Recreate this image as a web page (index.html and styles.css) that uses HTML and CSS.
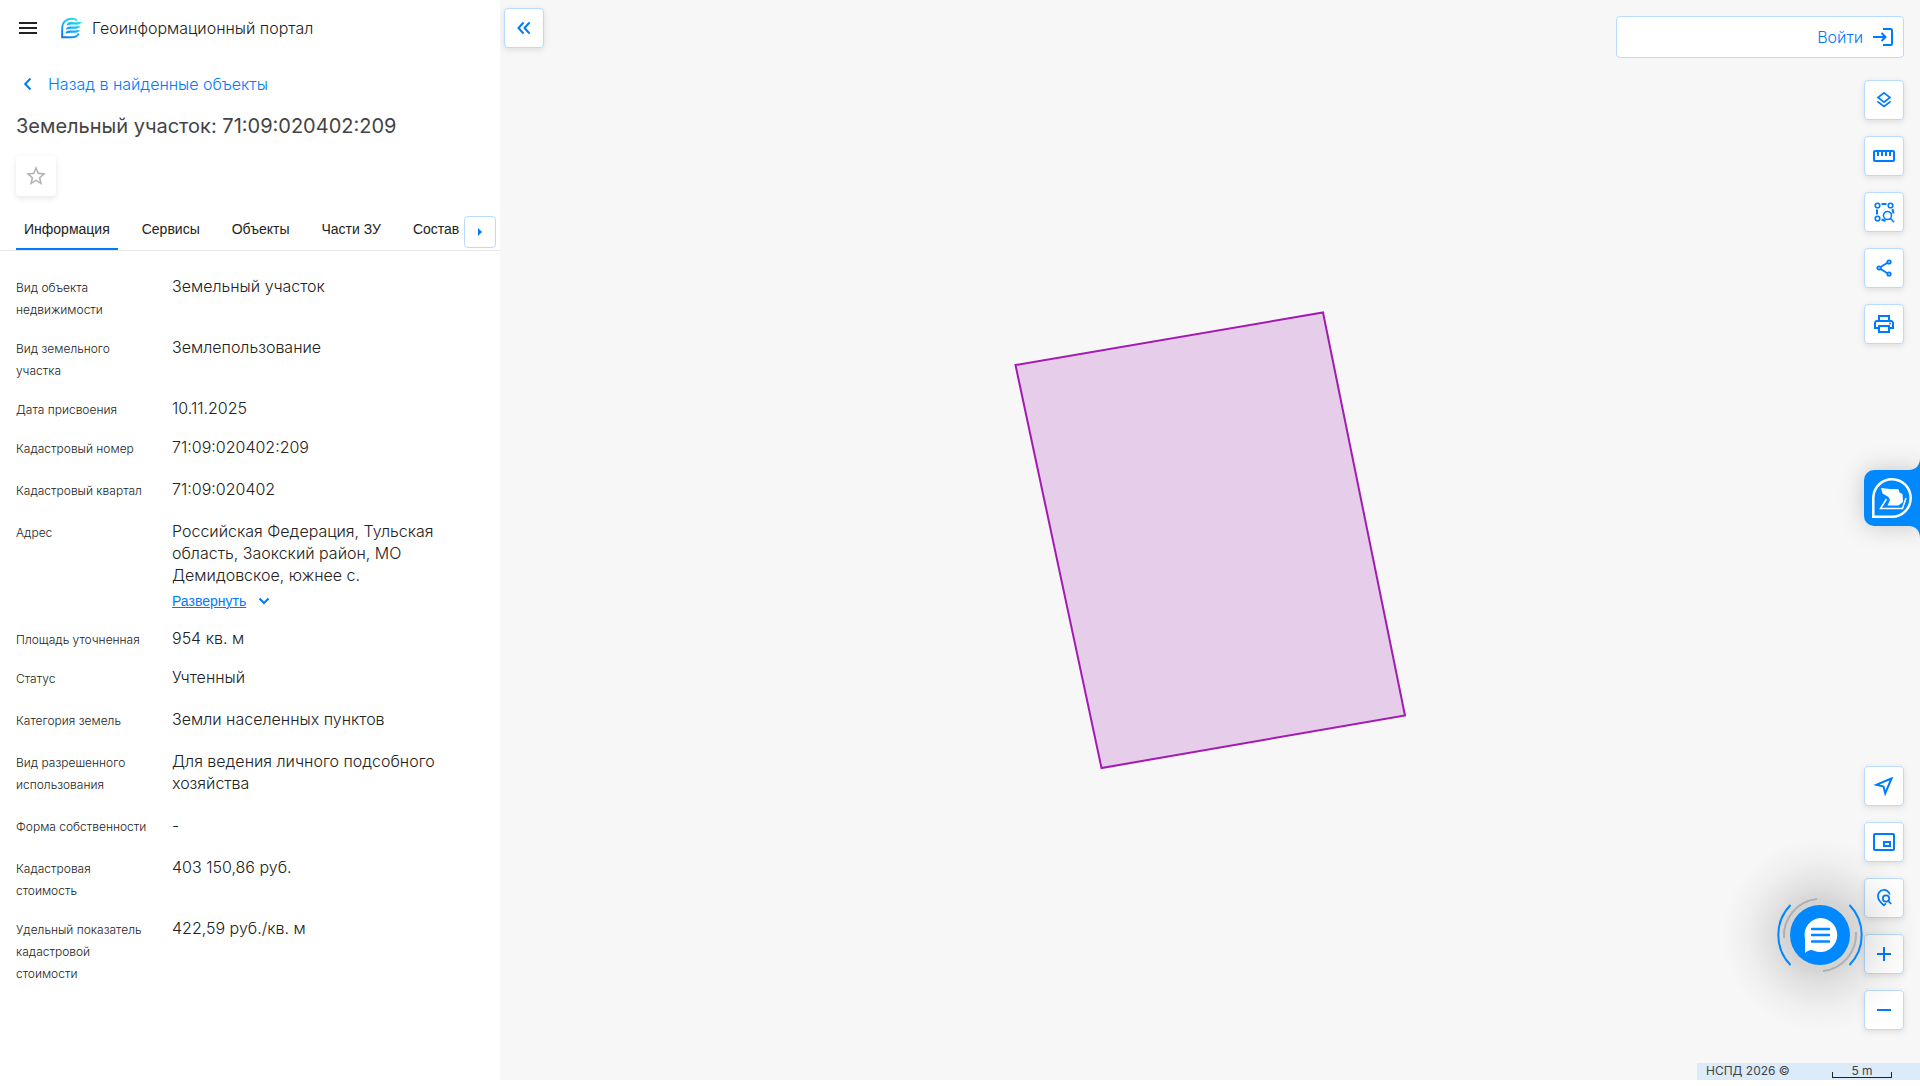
FILE: index.html
```html
<!DOCTYPE html>
<html lang="ru">
<head>
<meta charset="utf-8">
<meta name="viewport" content="width=device-width, initial-scale=1">
<title>Геоинформационный портал</title>
<link rel="stylesheet" href="styles.css">
</head>
<body>
<div class="app">
  <aside class="sidebar">
    <header class="topbar">
      <button class="icon-btn" type="button" aria-label="Меню">
        <svg width="24" height="24" viewBox="0 0 24 24" fill="#222"><path d="M3 6h18v2H3zM3 11h18v2H3zM3 16h18v2H3z"/></svg>
      </button>
      <a class="brand" href="#">
        <svg width="22" height="22" viewBox="0 0 22 22" aria-hidden="true">
          <defs><linearGradient id="logo" gradientUnits="userSpaceOnUse" x1="18" y1="1" x2="4" y2="21"><stop offset="0" stop-color="#2cecdc"/><stop offset=".45" stop-color="#10b8fb"/><stop offset="1" stop-color="#1670ff"/></linearGradient></defs>
          <path d="M17 3.200C15.500 2.200 13.800 1.800 12 1.800C6 1.800 2.200 5.500 2.200 11.500V20.200H12C15 20.200 17.500 18.800 18.800 16.500" fill="none" stroke="url(#logo)" stroke-width="2"/>
          <path d="M9 5.200C12 4.200 15 6 22 4.800C20.500 7.500 18 7.800 15 7.600C12.500 7.500 9.500 7.400 6.500 8.600C7 7 7.800 5.800 9 5.200Z" fill="url(#logo)"/>
          <path d="M7.500 10C11 8.900 15 10.200 20.500 8.800C19.500 11.300 17.500 11.800 15 11.700C12 11.600 9 11.600 6 12.700C6.200 11.400 6.700 10.400 7.500 10Z" fill="url(#logo)"/>
          <path d="M7 14C10.500 12.900 14.500 14.200 20 12.800C19 15.300 17.200 15.800 14.500 15.700C11.500 15.600 8.500 15.600 5.500 16.700C5.700 15.400 6.200 14.400 7 14Z" fill="url(#logo)"/>
        </svg>
        <span>Геоинформационный портал</span>
      </a>
    </header>

    <a class="back" href="#">
      <svg width="24" height="24" viewBox="0 0 24 24" fill="none" stroke="#007bff" stroke-width="2"><path d="M14.500 6.500L9.200 12l5.300 5.500"/></svg>
      <span>Назад в найденные объекты</span>
    </a>
    <h1 class="title">Земельный участок: 71:09:020402:209</h1>
    <button class="favorite" type="button" aria-label="В избранное">
      <svg width="24" height="24" viewBox="0 0 24 24" fill="#b4b4b4"><path d="M22 9.240l-7.190-.62L12 2 9.190 8.630 2 9.240l5.460 4.730L5.820 21 12 17.270 18.180 21l-1.630-7.030L22 9.240zM12 15.400l-3.760 2.270 1-4.280-3.320-2.880 4.380-.38L12 6.100l1.710 4.040 4.380.38-3.320 2.880 1 4.280L12 15.400z"/></svg>
    </button>

    <nav class="tabs">
      <div class="tab-list">
        <a class="tab active" href="#">Информация</a>
        <a class="tab" href="#">Сервисы</a>
        <a class="tab" href="#">Объекты</a>
        <a class="tab" href="#">Части ЗУ</a>
        <a class="tab" href="#">Состав</a>
      </div>
      <button class="tab-next" type="button" aria-label="Следующие вкладки">
        <svg width="6" height="10" viewBox="0 0 6 10" fill="#007bff"><path d="M1 1l4 4-4 4z"/></svg>
      </button>
    </nav>

    <dl class="props">
      <div class="row tight"><dt>Вид объекта недвижимости</dt><dd>Земельный участок</dd></div>
      <div class="row tight"><dt>Вид земельного участка</dt><dd>Землепользование</dd></div>
      <div class="row tight"><dt>Дата присвоения</dt><dd>10.11.2025</dd></div>
      <div class="row"><dt>Кадастровый номер</dt><dd>71:09:020402:209</dd></div>
      <div class="row"><dt>Кадастровый квартал</dt><dd>71:09:020402</dd></div>
      <div class="row tight"><dt>Адрес</dt><dd>Российская Федерация, Тульская область, Заокский район, МО Демидовское, южнее с.
        <button class="expand" type="button"><span>Развернуть</span><svg width="12" height="12" viewBox="0 0 12 12" fill="none" stroke="#007bff" stroke-width="2"><path d="M1.500 3.500L6 8l4.500-4.500"/></svg></button></dd></div>
      <div class="row tight"><dt>Площадь уточненная</dt><dd>954 кв. м</dd></div>
      <div class="row"><dt>Статус</dt><dd>Учтенный</dd></div>
      <div class="row"><dt>Категория земель</dt><dd>Земли населенных пунктов</dd></div>
      <div class="row"><dt>Вид разрешенного использования</dt><dd>Для ведения личного подсобного хозяйства</dd></div>
      <div class="row"><dt>Форма собственности</dt><dd>-</dd></div>
      <div class="row tight"><dt>Кадастровая стоимость</dt><dd>403 150,86 руб.</dd></div>
      <div class="row"><dt>Удельный показатель кадастровой стоимости</dt><dd>422,59 руб./кв. м</dd></div>
    </dl>
  </aside>

  <main class="map">
    <svg class="parcel" width="394" height="460" viewBox="0 0 394 460" aria-label="Земельный участок 71:09:020402:209"><path d="M2.500 55L310 2.500L392 405.500L88.500 458Z" fill="#e6cde9" stroke="#a31bb3" stroke-width="2"/></svg>

    <button class="tool collapse" type="button" aria-label="Свернуть панель">
      <svg width="24" height="24" viewBox="0 0 24 24" fill="none" stroke="#007bff" stroke-width="2"><path d="M11.500 6.500L6.500 12l5 5.500M17.500 6.500L12.500 12l5 5.500"/></svg>
    </button>

    <div class="controls">
      <button class="login" type="button"><span>Войти</span>
        <svg width="24" height="24" viewBox="0 0 24 24" fill="none" stroke="#007bff" stroke-width="2"><path d="M12 4h7.500a1.500 1.500 0 0 1 1.500 1.500v13a1.500 1.500 0 0 1-1.500 1.500H12M2 12h12M10.500 8l4 4-4 4"/></svg>
      </button>
      <div class="tools">
        <button class="tool" type="button" aria-label="Слои"><svg width="24" height="24" viewBox="0 0 24 24" fill="none" stroke="#007bff" stroke-width="1.700"><path d="M12 4.800l6 4.700-6 4.700-6-4.700zM5.300 13.300L12 18.500l6.700-5.200"/></svg></button>
        <button class="tool" type="button" aria-label="Измерения"><svg width="24" height="24" viewBox="0 0 24 24" fill="none" stroke="#007bff" stroke-width="2"><rect x="2" y="7" width="20" height="10" rx="1"/><path d="M6 7v5M10 7v5M14 7v5M18 7v5"/></svg></button>
        <button class="tool" type="button" aria-label="Поиск по области"><svg width="24" height="24" viewBox="0 0 24 24" fill="none" stroke="#007bff" stroke-width="1.600"><circle cx="5.500" cy="5.500" r="2.300"/><circle cx="18.500" cy="5.500" r="2.300"/><circle cx="5.500" cy="18.500" r="2.300"/><circle cx="15.500" cy="15.500" r="4"/><path d="M18.500 18.500l3.500 3.700"/><path stroke-width="2" d="M9.500 4h5M5 9.500v5M20.500 9l1 4.500M9.500 19.500l4 1.500"/></svg></button>
        <button class="tool" type="button" aria-label="Поделиться"><svg width="24" height="24" viewBox="0 0 24 24" fill="none" stroke="#007bff" stroke-width="1.800"><circle cx="7" cy="12" r="1.700"/><circle cx="17" cy="6" r="1.700"/><circle cx="17" cy="18" r="1.700"/><path d="M8.500 11l7-4.200M8.500 13l7 4.200"/></svg></button>
        <button class="tool" type="button" aria-label="Печать"><svg width="24" height="24" viewBox="0 0 24 24" fill="#007bff"><path d="M19 8h-1V3H6v5H5c-1.660 0-3 1.340-3 3v6h4v4h12v-4h4v-6c0-1.660-1.340-3-3-3zM8 5h8v3H8V5zm8 14H8v-4h8v4zm2-4v-2H6v2H4v-4c0-.55.45-1 1-1h14c.55 0 1 .45 1 1v4h-2z"/><circle cx="18" cy="11.500" r="1"/></svg></button>
      </div>
      <div class="tools bottom">
        <button class="tool" type="button" aria-label="Моё местоположение"><svg width="24" height="24" viewBox="0 0 24 24" fill="none" stroke="#007bff" stroke-width="2"><path d="M19.500 4.500L4.500 10.700l7 1.800 1.700 6.800z"/></svg></button>
        <button class="tool" type="button" aria-label="Обзорная карта"><svg width="24" height="24" viewBox="0 0 24 24" fill="none" stroke="#007bff" stroke-width="2"><rect x="2" y="4" width="20" height="16" rx="1"/><rect x="12" y="12" width="6" height="4"/></svg></button>
        <button class="tool" type="button" aria-label="Поиск по координатам"><svg width="24" height="24" viewBox="0 0 24 24" fill="none" stroke="#007bff" stroke-width="1.700"><path d="M17.800 8.500A6 6 0 0 0 6 10.500c0 3 2.500 6 5.800 8.800l2.200-2"/><circle cx="14" cy="12.500" r="3.200"/><path d="M16.200 14.800l3 3.200"/></svg></button>
        <button class="tool" type="button" aria-label="Приблизить"><svg width="24" height="24" viewBox="0 0 24 24" fill="#007bff"><path d="M5 11h14v2H5zM11 5h2v14h-2z"/></svg></button>
        <button class="tool" type="button" aria-label="Отдалить"><svg width="24" height="24" viewBox="0 0 24 24" fill="#007bff"><path d="M5 11h14v2H5z"/></svg></button>
      </div>
    </div>

    <button class="side-widget" type="button" aria-label="Виджет помощи">
      <svg width="56" height="80" viewBox="0 0 56 80"><path d="M56 0C56 7 52 12 45 12H10A10 10 0 0 0 0 22V58A10 10 0 0 0 10 68H45C52 68 56 73 56 80Z" fill="#0088ff"/>
      <path d="M9.300 58.700V39.500A18.700 18.700 0 1 1 28 58.700Z" fill="none" stroke="#fff" stroke-width="2.500"/>
      <path d="M17 30L26 31L34.500 31.200L35.500 34.500L38.500 36L39 44L34.500 47.500H23.500L26 42L24.500 39L18.500 35.500Z" fill="#fff"/>
      <path d="M22.500 41L16.500 50.500H38.500L42 40" fill="none" stroke="#fff" stroke-width="1.500"/></svg>
    </button>

    <button class="chat" type="button" aria-label="Открыть чат">
      <svg width="88" height="88" viewBox="0 0 88 88" fill="none"><circle cx="44" cy="44" r="30" fill="#0088ff"/>
      <path d="M14.500 14A43 43 0 0 0 14.500 74M73.500 14A43 43 0 0 1 73.500 74" stroke="#0088ff" stroke-width="2"/>
      <path d="M41 8A37 37 0 0 0 8 47M47 80A37 37 0 0 0 80 41" stroke="#b0b0b0" stroke-width="2"/>
      <path d="M44.500 27A17 17 0 1 1 38 59.800C34 58 32 60 29 62V48A17 17 0 0 1 44.500 27Z" fill="#fff"/>
      <path d="M36 38h17M36 44h17M36 50.500h17" stroke="#0088ff" stroke-width="2.400" stroke-linecap="round"/></svg>
    </button>

    <footer class="attribution"><span>НСПД 2026 ©</span><span class="scale">5 m</span></footer>
  </main>
</div>
</body>
</html>
```
FILE: styles.css
```css
* { box-sizing: border-box; }
body {
  margin: 0;
  background: #fff;
  color: #222;
  font-family: Inter, "Noto Sans", sans-serif;
  font-size: 16px;
  font-weight: 300;
}
button { font: inherit; color: inherit; padding: 0; border: 0; background: none; cursor: pointer; }
a { color: inherit; text-decoration: none; }
svg { display: block; flex: none; }

.app { display: flex; height: calc(100vh - 6px); }

.sidebar { width: 500px; flex: none; background: #fff; overflow: hidden; }
.topbar { display: flex; align-items: center; gap: 20px; height: 56px; padding: 0 16px; }
.brand { display: flex; align-items: center; gap: 10px; }
.back { display: flex; align-items: center; gap: 8px; height: 56px; padding: 0 16px; color: #007bff; }
.title { margin: 0; padding: 0 16px; font-size: 20px; font-weight: 400; line-height: 28px; color: #444; }
.favorite {
  display: flex; align-items: center; justify-content: center;
  width: 40px; height: 40px; margin: 16px 16px 0;
  border-radius: 4px; box-shadow: 0 2px 6px rgba(0, 0, 0, .1);
}

.tabs { display: flex; align-items: flex-end; height: 55px; padding-right: 4px; border-bottom: 1px solid #e8e8e8; }
.tab-list { display: flex; flex: 1; gap: 16px; padding-left: 16px; overflow: hidden; }
.tab {
  height: 41px; padding: 10px 8px 0;
  font-family: "Liberation Sans", Arial, sans-serif; font-size: 14px; font-weight: 400; line-height: 20px;
  white-space: nowrap;
}
.tab.active { border-bottom: 2px solid #007bff; }
.tab-next {
  display: flex; align-items: center; justify-content: center;
  width: 32px; height: 32px; margin-bottom: 2px;
  border: 1px solid #b8dbff; border-radius: 4px; background: #fff;
}

.props { margin: 0; padding: 24px 16px; }
.row { display: grid; grid-template-columns: 132px 272px; column-gap: 24px; padding-bottom: 18px; }
.row.tight { padding-bottom: 15px; }
dt { font-size: 12px; line-height: 22px; padding-top: 2px; }
dd { margin: 0; line-height: 22px; }
.expand {
  display: flex; align-items: center; gap: 12px; margin-top: 4px;
  color: #007bff; font-family: "Liberation Sans", Arial, sans-serif; font-size: 14px; line-height: 22px;
}
.expand span { text-decoration: underline; }

.map { position: relative; flex: 1; background: #f7f7f7; overflow: hidden; }
.parcel { position: absolute; left: 513px; top: 310px; }

.tool {
  display: flex; align-items: center; justify-content: center;
  width: 40px; height: 40px;
  border: 1px solid #b8dbff; border-radius: 4px; background: #fff;
  box-shadow: 0 2px 6px rgba(0, 0, 0, .1);
}
.collapse { position: absolute; left: 4px; top: 8px; }
.controls {
  display: flex; flex-direction: column; align-items: flex-end;
  height: 100%; padding: 16px 16px 50px;
}
.login {
  display: flex; align-items: center; justify-content: flex-end; gap: 8px;
  width: 288px; height: 42px; padding-right: 8px;
  border: 1px solid #b8dbff; border-radius: 4px; background: #fff; color: #007bff;
}
.tools { display: flex; flex-direction: column; gap: 16px; margin-top: 22px; }
.tools.bottom { margin-top: auto; }

.side-widget { position: absolute; right: 0; top: 458px; filter: drop-shadow(0 0 12px rgba(0, 0, 0, .2)); }
.chat { position: absolute; right: 56px; bottom: 101px; border-radius: 50%; }
.chat::before {
  content: ""; position: absolute; inset: -54px; border-radius: 50%; pointer-events: none;
  background: radial-gradient(circle closest-side, rgba(0, 0, 0, .14) 35%, rgba(0, 0, 0, .09) 50%, rgba(0, 0, 0, .03) 75%, transparent);
}
.chat svg { position: relative; }

.attribution {
  position: absolute; right: 0; bottom: 0;
  display: flex; justify-content: space-between; align-items: center;
  width: 223px; height: 17px; padding: 0 28px 2px 9px;
  background: #dbebfa; color: #444; font-size: 12px; font-weight: 400;
}
.scale { width: 60px; height: 14px; line-height: 14px; text-align: center; position: relative; }
.scale::after { content: ""; position: absolute; inset: 8px 0 0; border: 1px solid #222; border-top: 0; }
```
